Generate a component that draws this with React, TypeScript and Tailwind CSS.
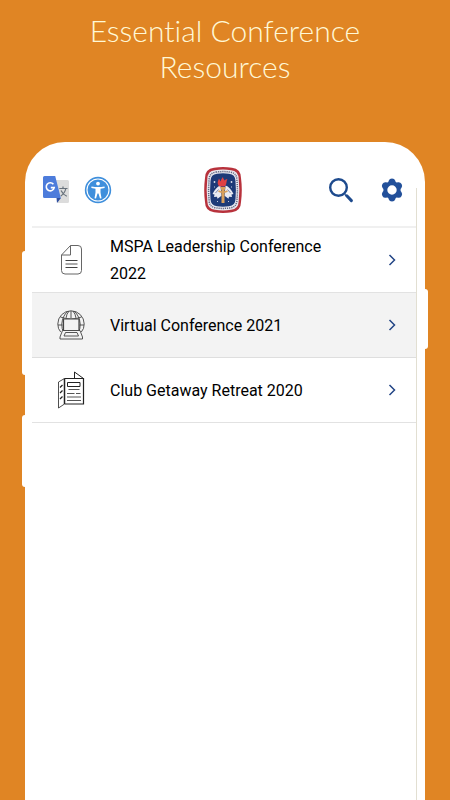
import type { ReactNode } from "react"

type Resource = {
  title: string
  icon: ReactNode
  active?: boolean
}

function TranslateIcon() {
  return (
    <svg width="28" height="30" viewBox="0 0 28 30" aria-hidden="true">
      <path d="M11 5h14.500a1.500 1.500 0 0 1 1.500 1.500v20a1.500 1.500 0 0 1-1.500 1.500H16z" fill="#dcdcdc" />
      <path d="M14.500 23H19l-4 5z" fill="#2f4f9f" />
      <path d="M2.500 1h10.700l5.600 22H2.500A1.500 1.500 0 0 1 1 21.500v-19A1.500 1.500 0 0 1 2.500 1z" fill="#4d7cdb" />
      <path d="M11.400 9.300a4 4 0 1 0 .8 3.300H8.800" fill="none" stroke="#fff" strokeWidth="1.600" />
      <path d="M17.300 13.500h8.200M21 11.500v2M23.800 13.500c-.7 3.400-2.800 6-5 7.600M19 15.500c1.200 2.600 3.400 4.700 5.800 5.800" fill="none" stroke="#66707a" strokeWidth="1.200" />
    </svg>
  )
}

function AccessibilityIcon() {
  return (
    <svg width="28" height="28" viewBox="0 0 28 28" aria-hidden="true">
      <circle cx="14" cy="14" r="13.200" fill="#3f8fdc" />
      <circle cx="14" cy="14" r="11" fill="none" stroke="#fff" strokeWidth="1.100" />
      <circle cx="14" cy="7.600" r="1.900" fill="#fff" />
      <path d="M7.500 10.500c4.300.7 8.700.7 13 0l.2 1.400-4.200.9v3.700l1 5.700-1.500.3-1.500-5h-1l-1.500 5-1.500-.3 1-5.700v-3.700l-4.200-.9z" fill="#fff" />
    </svg>
  )
}

function Crest() {
  return (
    <svg width="38" height="46" viewBox="0 0 38 46" role="img" aria-label="Club crest">
      <path d="M10 .8Q19-.8 28 .8Q37 2 37 11Q38.600 23 37 35Q37 44 28 45.200Q19 46.800 10 45.200Q1 44 1 35Q-.6 23 1 11Q1 2 10 .8z" fill="#b8323c" />
      <path d="M11 3.200Q19 2 27 3.200Q34.500 4 34.700 12Q36 23 34.700 34Q34.500 42 27 42.800Q19 44 11 42.800Q3.500 42 3.300 34Q2 23 3.300 12Q3.500 4 11 3.200z" fill="#e9e9f0" />
      <path d="M12 5.100Q19 4.100 26 5.100Q32.900 6 32.900 13Q33.900 23 32.900 33Q32.900 40 26 40.900Q19 41.900 12 40.900Q5.100 40 5.100 33Q4.100 23 5.100 13Q5.100 6 12 5.100z" fill="none" stroke="#626783" strokeWidth="1.500" strokeDasharray="1.200 .9" />
      <path d="M13 6.700Q19 6 25 6.700Q31.300 7.300 31.500 14Q32.300 23 31.500 32Q31.300 38.700 25 39.300Q19 40 13 39.300Q6.700 38.700 6.500 32Q5.700 23 6.500 14Q6.700 7.300 13 6.700z" fill="#1d3a78" />
      <path d="M16.500 18.500c-3 1-6 4-8 8.500l2 .5-.5 2.500 3-.3.500 2 4-3zM21.500 18.500c3 1 6 4 8 8.500l-2 .5.500 2.500-3-.3-.5 2-4-3z" fill="#e9eaf1" />
      <path d="M11.500 26l3-3.500M26.500 26l-3-3.500" stroke="#5f6d97" strokeWidth=".8" />
      <path d="M16.300 20h5.400l-1.200 3.500V36h-3V23.500z" fill="#d9a05b" />
      <path d="M14.500 24q4.500 2.500 9 0" fill="none" stroke="#d9a05b" strokeWidth="1.600" />
      <path d="M15.500 19.500c-3-3-1.500-5.500-.5-8 .7 1 1 2 1.500 3 .7-1.300.8-3 2.500-4.500 0 2 1.300 2.300 1.500 3.500.8-.7 1.500-1.300 3-1.500-1.500 2-.3 5.500-3 7.500z" fill="#df4144" />
      <path d="M10.500 14v2M9.500 15h2M27.500 14v2M26.500 15h2M10 20h1M27 20h1M13 34.500h1M24 34.500h1" stroke="#d7dbea" strokeWidth=".9" />
    </svg>
  )
}

function SearchIcon() {
  return (
    <svg width="26" height="26" viewBox="0 0 26 26" fill="none" stroke="#1d4a8d" aria-hidden="true">
      <circle cx="10.500" cy="10.500" r="8.300" strokeWidth="2.400" />
      <path d="M17 17.500l1.500 1.500" strokeWidth="1.500" />
      <path d="M18.800 18.800l4.600 4.800" strokeWidth="3" strokeLinecap="round" />
    </svg>
  )
}

function GearIcon() {
  return (
    <svg width="24" height="24" viewBox="0 0 24 24" aria-hidden="true">
      <path
        fill="#22509a"
        fillRule="evenodd"
        d="M8.700 2.700Q9.500.5 12 .5t3.300 2.200l.4 1.200q.5.200 1 .5l1.400-.2q2.300-.3 3.500 1.800t-.2 4l-.8 1v2l.8 1q1.400 1.900.2 4t-3.500 1.800l-1.400-.2q-.5.300-1 .5l-.4 1.200Q14.500 23.500 12 23.500t-3.300-2.200l-.4-1.200q-.5-.2-1-.5l-1.400.2q-2.300.3-3.500-1.800t.2-4l.8-1v-2l-.8-1Q1.200 8.100 2.400 6t3.500-1.800l1.400.2q.5-.3 1-.5zM12 7.300a4.700 4.700 0 1 0 0 9.400a4.700 4.700 0 1 0 0-9.400z"
      />
    </svg>
  )
}

function DocumentIcon() {
  return (
    <svg width="30" height="38" viewBox="0 0 30 38" fill="none" stroke="#666" aria-hidden="true">
      <path d="M14.500 4.500H22q3.500 0 3.500 3.500v21.500q0 3.500-3.500 3.500H9q-3.500 0-3.500-3.500V14z" />
      <path d="M14.500 4.500v9.500h-9" />
      <path d="M9.500 19.500h12M9.500 26.500h12" stroke="#444" />
      <path d="M9.500 23h12" stroke="#aaa" strokeWidth="2" />
    </svg>
  )
}

function GlobeLaptopIcon() {
  return (
    <svg width="30" height="38" viewBox="0 0 30 38" fill="none" stroke="#444" strokeWidth=".9" aria-hidden="true">
      <path d="M4.700 26Q1.800 23 1.800 18A13.200 13.200 0 0 1 28.200 18Q28.200 23 25.300 26" />
      <path d="M15 5v7M11.500 5.500Q6.500 10 5.800 18q0 5 1.500 8M18.500 5.500Q23.500 10 24.200 18q0 5-1.500 8M13 5Q10.500 8 10 12M17 5q2.500 3 3 7" />
      <path d="M4.500 11q10.500 4 21 0M2 19h4.500M23.500 19H28" />
      <path d="M7.500 13h15.500v11.500H7.500z" fill="#f3f3f3" strokeWidth="1.200" />
      <path d="M6.500 24.500h17.500l2.500 6.500v2H4v-2z" fill="#f3f3f3" />
      <path d="M9.500 26.500h11.500l1.500 3.500H8z" />
    </svg>
  )
}

function BrochureIcon() {
  return (
    <svg width="30" height="38" viewBox="0 0 30 38" fill="none" stroke="#222" aria-hidden="true">
      <path d="M8.500 7.500h19v25.500h-19" strokeWidth="1.200" />
      <path d="M8.500 7.500L2.500 11v26l6-4" strokeWidth=".8" />
      <path d="M8.500 7.500v25.500" strokeWidth="1.500" />
      <path d="M18.500 7.500V1l9 6.500" />
      <path d="M11.500 11.500h12.500v4H11.500z" />
      <path d="M12.500 18.500h11M11 22.500h7.500M20 22.500h4.500M11 26h14M11 29.500h14" stroke="#555" />
      <path d="M4 16.500l2.500-2.500M4 22l2.500-2.500M4 28l2.500-2.500" strokeWidth="1.300" />
    </svg>
  )
}

function Chevron() {
  return (
    <svg width="8" height="12" viewBox="0 0 8 12" fill="none" stroke="#234585" strokeWidth="1.500" aria-hidden="true">
      <path d="M1.500 1l5 5-5 5" />
    </svg>
  )
}

const resources: Resource[] = [
  { title: "MSPA Leadership Conference 2022", icon: <DocumentIcon /> },
  { title: "Virtual Conference 2021", icon: <GlobeLaptopIcon />, active: true },
  { title: "Club Getaway Retreat 2020", icon: <BrochureIcon /> },
]

function ResourceRow({ title, icon, active }: Resource) {
  return (
    <li className={active ? "bg-[#f3f3f3] border-b border-[#dedede]" : "border-b border-[#e2e2e2]"}>
      <a href="#" className="flex items-center min-h-16 pl-6 pr-5">
        <span className="w-[30px] shrink-0">{icon}</span>
        <span className="ml-6 flex-1 pr-12 text-[16px] leading-[27px] text-black">{title}</span>
        <Chevron />
      </a>
    </li>
  )
}

export default function App() {
  return (
    <main className="min-h-screen flex flex-col bg-[#e08524] font-['Roboto',sans-serif]">
      <h1 className="pt-3 pb-[58px] px-16 text-center text-[30px] leading-[36px] font-light text-[#fff8d6] font-['Lato',sans-serif] [font-variant-ligatures:none]">
        Essential Conference Resources
      </h1>

      <div className="relative flex-1 mx-[25px] bg-white rounded-t-[40px]">
        {/* side keys */}
        <span className="absolute -left-[3px] top-[109px] w-1 h-[124px] rounded-l-[3px] bg-white" />
        <span className="absolute -left-[3px] top-[273px] w-1 h-[72px] rounded-l-[3px] bg-white" />
        <span className="absolute -right-[3px] top-[147px] w-1 h-[60px] rounded-r-[3px] bg-white" />
        {/* screen edge */}
        <span className="absolute right-2 top-[46px] bottom-0 w-px bg-[#e2dfd2]" />

        <div className="pl-[7px] pr-[9px]">
          <header className="flex items-center justify-between h-[86px] pt-3 pl-2.5 pr-3 border-b-2 border-[#f0f0f0]">
            <div className="flex flex-1 items-center gap-3.5">
              <button aria-label="Translate"><TranslateIcon /></button>
              <button aria-label="Accessibility"><AccessibilityIcon /></button>
            </div>
            <Crest />
            <div className="flex flex-1 items-center justify-end gap-[26px]">
              <button aria-label="Search"><SearchIcon /></button>
              <button aria-label="Settings"><GearIcon /></button>
            </div>
          </header>

          <ul>
            {resources.map((resource) => (
              <ResourceRow key={resource.title} {...resource} />
            ))}
          </ul>
        </div>
      </div>
    </main>
  )
}
